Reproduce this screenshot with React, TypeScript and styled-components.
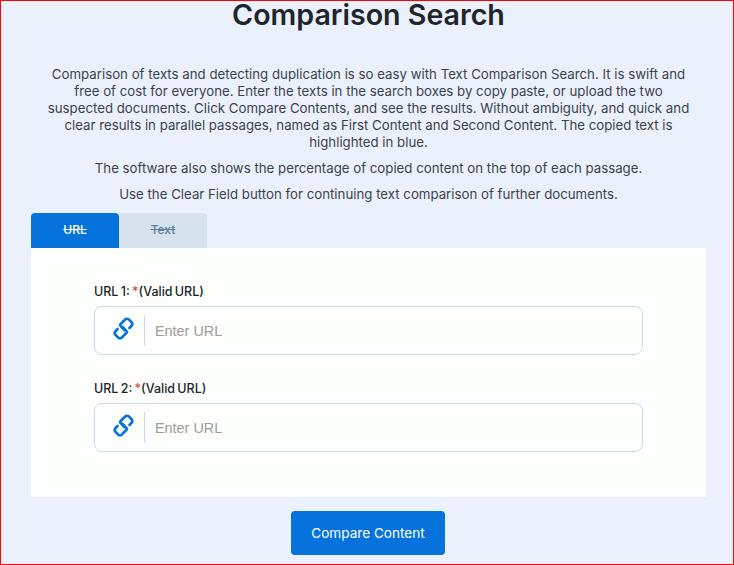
import React from "react";
import styled, { createGlobalStyle } from "styled-components";

const Global = createGlobalStyle`
  html, body { margin: 0; padding: 0; }
  body { font-family: "Inter", "Liberation Sans", sans-serif; background: #eaf1fc; }
`;

const Page = styled.div`
  box-sizing: border-box;
  width: 734px;
  height: 565px;
  border: 1px solid #ff0000;
  background: #eaf1fc;
  padding: 0 27px 0 30px;
`;

const Title = styled.h1`
  margin: -1px 0 0;
  height: 30px;
  font-size: 28.6px;
  line-height: 30px;
  font-weight: 600;
  color: #212529;
  text-align: center;
`;

const Intro = styled.div`
  margin-top: 36px;
  padding: 0 10px 1px;
  text-align: center;
  color: #3c4249;
  font-size: 13.25px;
  line-height: 17px;
`;

const Para = styled.p`
  margin: 0 0 9px;
`;

const Tabs = styled.div`
  display: flex;
`;

const Tab = styled.div<{ $active?: boolean }>`
  width: 88px;
  height: 35px;
  display: flex;
  align-items: center;
  justify-content: center;
  padding-bottom: 2px;
  box-sizing: border-box;
  font-size: 12px;
  font-weight: 500;
  text-decoration: line-through;
  border-radius: ${(p) => (p.$active ? "4px 4px 0 0" : "0 4px 0 0")};
  background: ${(p) => (p.$active ? "#0673dc" : "#d6e2ee")};
  color: ${(p) => (p.$active ? "#ffffff" : "#5f7f9c")};
`;

const Panel = styled.div`
  width: 675px;
  height: 249px;
  box-sizing: border-box;
  background: #fdfffd;
  padding: 35px 63px 0;
`;

const Field = styled.div`
  margin-bottom: 25px;
`;

const Label = styled.div`
  font-size: 12.5px;
  word-spacing: -1px;
  line-height: 18px;
  font-weight: 500;
  color: #212529;
  margin-bottom: 5px;
`;

const Star = styled.span`
  color: #e8453c;
`;

const InputBox = styled.div`
  box-sizing: border-box;
  width: 549px;
  height: 49px;
  border: 1px solid #c9d9e8;
  border-radius: 8px;
  display: flex;
  align-items: center;
`;

const IconCell = styled.div`
  width: 50px;
  height: 31px;
  box-sizing: border-box;
  border-right: 1px solid #c9d9e8;
  padding-left: 8px;
  padding-bottom: 4px;
  display: flex;
  align-items: center;
  justify-content: center;
`;

const Placeholder = styled.div`
  padding-left: 10px;
  font-family: "Liberation Sans", Arial, sans-serif;
  font-size: 14.4px;
  color: #a09a9a;
`;

const Actions = styled.div`
  display: flex;
  justify-content: center;
  margin-top: 14px;
  width: 674px;
`;

const Compare = styled.button`
  width: 154px;
  height: 44px;
  border: 0;
  border-radius: 4px;
  background: #0673dc;
  color: #ffffff;
  font-family: inherit;
  font-size: 13.6px;
  font-weight: 400;
`;

const LinkIcon = () => (
  <svg width="21" height="23" viewBox="0 0 21 23" fill="none" stroke="#0673dc" strokeWidth="2.6" strokeLinecap="round" strokeLinejoin="round">
    <path d="M11.5 13 L7.6 9 Q6.5 8 7.6 7 L12.5 2.2 Q14 1.2 15.5 2.2 L18.8 5.5 Q20 7 18.8 8.5 L16.5 11" />
    <path d="M9.5 10 L13.4 14 Q14.5 15 13.4 16 L8.5 20.8 Q7 21.8 5.5 20.8 L2.2 17.5 Q1 16 2.2 14.5 L4.5 12" />
  </svg>
);

const UrlField = ({ n }: { n: number }) => (
  <Field>
    <Label>
      URL {n}: <Star>*</Star>(Valid URL)
    </Label>
    <InputBox>
      <IconCell>
        <LinkIcon />
      </IconCell>
      <Placeholder>Enter URL</Placeholder>
    </InputBox>
  </Field>
);

export default function App() {
  return (
    <>
      <Global />
      <Page>
        <Title>Comparison Search</Title>
        <Intro>
          <Para>
            Comparison of texts and detecting duplication is so easy with Text Comparison Search. It is swift and free of cost for everyone. Enter the texts in the search boxes by copy paste, or upload the two suspected documents. Click Compare Contents, and see the results. Without ambiguity, and quick and clear results in parallel passages, named as First Content and Second Content. The copied text is highlighted in blue.
          </Para>
          <Para>The software also shows the percentage of copied content on the top of each passage.</Para>
          <Para>Use the Clear Field button for continuing text comparison of further documents.</Para>
        </Intro>
        <Tabs>
          <Tab $active>URL</Tab>
          <Tab>Text</Tab>
        </Tabs>
        <Panel>
          <UrlField n={1} />
          <UrlField n={2} />
        </Panel>
        <Actions>
          <Compare>Compare Content</Compare>
        </Actions>
      </Page>
    </>
  );
}
